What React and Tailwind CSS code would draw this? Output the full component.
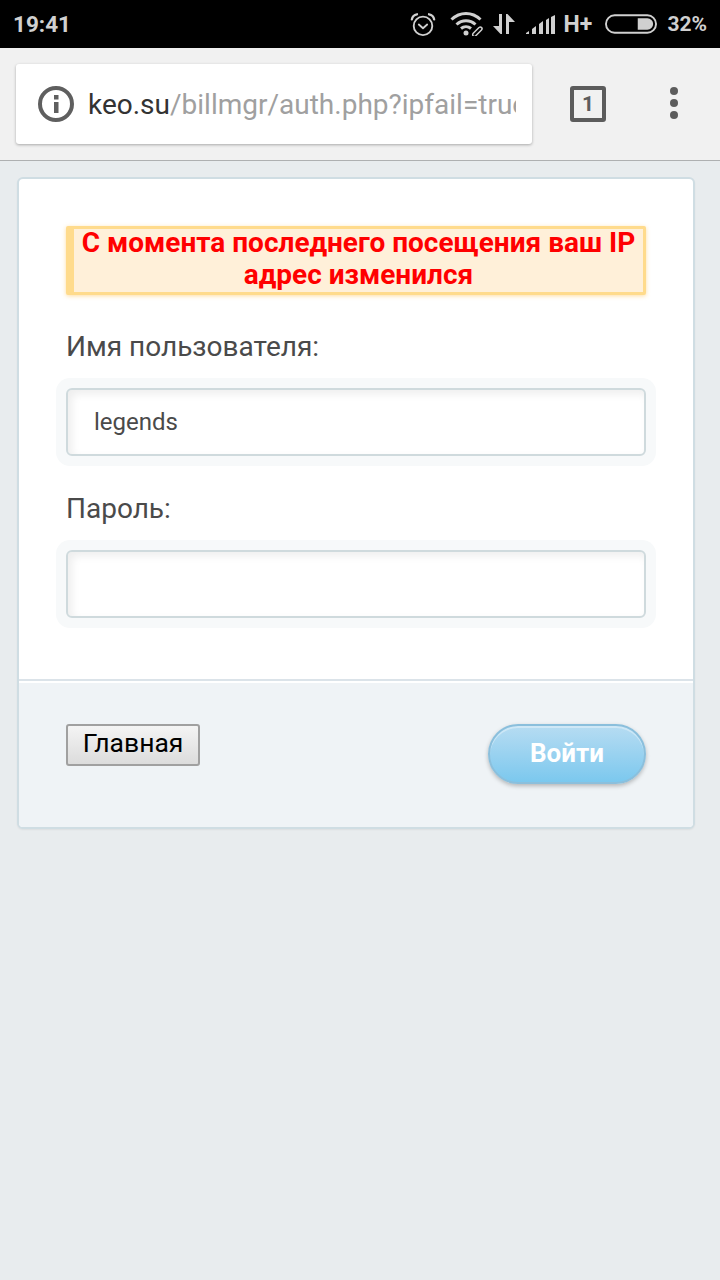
import React from 'react';

const roboto = "font-['Roboto',sans-serif]";

function AlarmIcon() {
  return (
    <svg width="26" height="25" viewBox="0 0 28 26" fill="none" stroke="#d0d0d0" strokeWidth="2">
      <circle cx="14" cy="14.5" r="10" />
      <path d="M9.5 13l4.5 4 4.5-4" strokeLinecap="round" strokeLinejoin="round" />
      <path d="M2 7.5C2.5 4.5 4.5 2.5 7.5 2M26 7.5C25.5 4.5 23.500 2.500 20.500 2" strokeWidth="2.500" strokeLinecap="round" />
    </svg>
  );
}

function WifiIcon() {
  return (
    <svg width="34" height="24" viewBox="0 0 34 24" fill="none" stroke="#d0d0d0">
      <path d="M1.500 7.500C10 -0.500 22 -0.500 30.500 7.500" strokeWidth="3" />
      <path d="M6.500 12.500C12 7.500 20 7.500 25.500 12.500" strokeWidth="3" />
      <path d="M11 16.500C14 14 18 14 21 16.500" strokeWidth="3" />
      <circle cx="16" cy="21" r="2.500" fill="#d0d0d0" stroke="none" />
      <path d="M23 21.500l6-6c2-1.500 4 1 2.500 2.500l-6 6c-1.500 1.500-3.500-.5-2.500-2.500z" strokeWidth="1.500" />
    </svg>
  );
}

function DataArrows() {
  return (
    <svg width="22" height="20" viewBox="0 0 22 20" fill="#d0d0d0">
      <path d="M6 0h3v20H7.500L0 12h6zM13 0h1.500L22 8h-6v12h-3z" />
    </svg>
  );
}

function SignalIcon() {
  return (
    <svg width="30" height="19" viewBox="0 0 30 19" fill="#d0d0d0">
      <path d="M0 19v-1l3-2v3zM6 19v-5l4-3v8zM13 19V9l4-3v13zM20 19V5l3-2v16zM25 19V2l4-2v19z" />
    </svg>
  );
}

function BatteryIcon() {
  return (
    <svg width="52" height="20" viewBox="0 0 54 20" fill="none">
      <rect x="1" y="1" width="52" height="18" rx="9" stroke="#d0d0d0" strokeWidth="2" />
      <path d="M34 4h10a6 6 0 0 1 0 12H34z" fill="#d0d0d0" />
    </svg>
  );
}

function StatusBar() {
  return (
    <div className={`h-12 bg-black flex items-center justify-between pl-[13px] pr-[13px] text-[#d0d0d0] ${roboto}`}>
      <span className="text-[22.5px] font-bold leading-none">19:41</span>
      <div className="flex items-center">
        <AlarmIcon />
        <div className="ml-[14px]"><WifiIcon /></div>
        <div className="ml-[9px]"><DataArrows /></div>
        <div className="ml-[11px]"><SignalIcon /></div>
        <span className="ml-[8px] text-[23px] font-bold leading-none">H+</span>
        <div className="ml-[13px]"><BatteryIcon /></div>
        <span className="ml-[10px] text-[21px] font-bold leading-none">32%</span>
      </div>
    </div>
  );
}

function Toolbar() {
  return (
    <div className={`h-[113px] bg-[#f1f1f1] border-b border-[#aeb0b1] flex items-start pt-4 pl-4 ${roboto}`}>
      <div className="w-[516px] h-20 bg-white rounded-[3px] shadow-[0_1px_3px_rgba(0,0,0,0.3)] flex items-center pl-[22px] pr-4">
        <svg width="36" height="36" viewBox="0 0 36 36" fill="none" className="shrink-0">
          <circle cx="18" cy="18" r="16" stroke="#5f5f5f" strokeWidth="4" />
          <rect x="16" y="9" width="4.500" height="4.500" fill="#5f5f5f" />
          <rect x="16" y="16" width="4.500" height="11" fill="#5f5f5f" />
        </svg>
        <div className="ml-[14px] pt-[2px] overflow-hidden whitespace-nowrap text-[28px] leading-[32px]">
          <span className="text-[#333333]">keo.su</span>
          <span className="text-[#a0a0a0]">/billmgr/auth.php?ipfail=true</span>
        </div>
      </div>
      <div className="ml-[38px] mt-[22px] w-9 h-9 border-[4px] border-[#5c5c5c] rounded-[3px] flex items-center justify-center text-[#5c5c5c] text-[21px] font-bold leading-none">
        1
      </div>
      <div className="ml-[64px] mt-[23px] flex flex-col gap-1">
        <div className="w-2 h-2 rounded-full bg-[#5c5c5c]" />
        <div className="w-2 h-2 rounded-full bg-[#5c5c5c]" />
        <div className="w-2 h-2 rounded-full bg-[#5c5c5c]" />
      </div>
    </div>
  );
}

function Field({ label, value }) {
  return (
    <div>
      <div className="mx-[10px] text-[28px] leading-[30px] text-[#4a4a4a]">{label}</div>
      <div className="mt-[16px] p-[10px] bg-[#f7f9fa] rounded-[14px]">
        <div className="h-[68px] bg-white border-2 border-[#cfdadd] rounded-[6px] shadow-[inset_4px_4px_8px_rgba(0,0,0,0.07)] flex items-center pl-[26px] text-[24px] text-[#4a4a4a]">
          {value}
        </div>
      </div>
    </div>
  );
}

export default function App() {
  return (
    <div className={`w-[720px] h-[1280px] bg-[#e8ecee] overflow-hidden ${roboto}`}>
      <StatusBar />
      <Toolbar />
      <div className="mt-4 ml-[17px] w-[678px] h-[652px] border-2 border-[#cfdde3] rounded-[6px] bg-white overflow-hidden flex flex-col shadow-[0_1px_2px_rgba(0,0,0,0.06)]">
        <div className="h-[500px] px-[37px] pt-[47px] shrink-0">
          <div className="mx-[10px] h-[69px] bg-[#fff0d9] border-[3px] border-l-[8px] border-[#ffdb8c] rounded-[2px] shadow-[0_1px_4px_rgba(255,200,100,0.6)] text-center text-[#ff0000] font-bold text-[28px] leading-[32px]">
            <div className="-mt-[2px]">С момента последнего посещения ваш IP адрес изменился</div>
          </div>
          <div className="mt-[37px]">
            <Field label="Имя пользователя:" value="legends" />
          </div>
          <div className="mt-[28px]">
            <Field label="Пароль:" value="" />
          </div>
        </div>
        <div className="flex-1 bg-[#eff3f6] border-t-2 border-[#dbe3e9] shadow-[inset_0_2px_0_#ffffff] px-[47px] pt-[43px] flex justify-between items-start">
          <button className="w-[134px] h-[42px] pb-[4px] border-2 border-[#a0a0a0] rounded-[3px] bg-gradient-to-b from-[#f4f4f4] to-[#dcdcdc] text-black text-[26.5px] leading-none">
            Главная
          </button>
          <button className="w-[158px] h-[60px] pb-[2px] rounded-full border-2 border-[#8bbfdc] bg-gradient-to-b from-[#b6dcf2] to-[#7bc8ee] shadow-[0_2px_4px_rgba(0,0,0,0.25),inset_0_2px_0_rgba(255,255,255,0.35)] text-white font-bold text-[26px] leading-none">
            Войти
          </button>
        </div>
      </div>
    </div>
  );
}
